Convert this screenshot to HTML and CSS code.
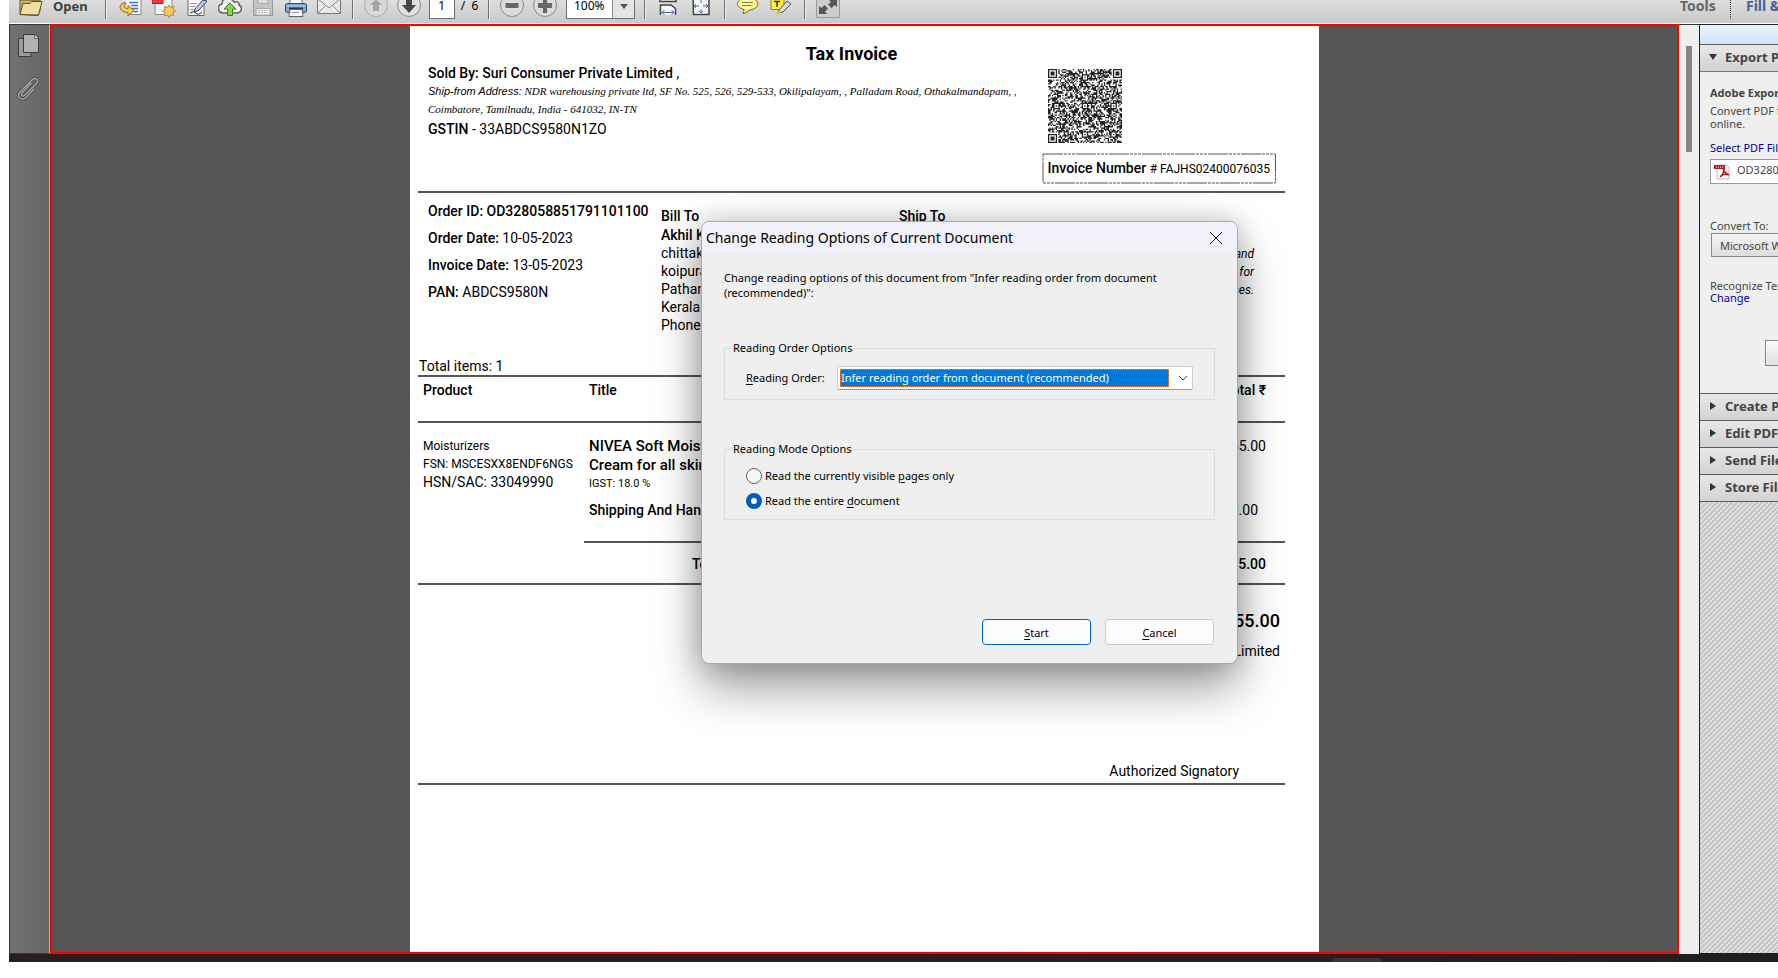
FILE: index.html
```html
<!DOCTYPE html>
<html lang="en">
<head>
<meta charset="utf-8">
<title>Tax Invoice</title>
<link rel="stylesheet" href="styles.css">
</head>
<body>
<div class="app">
  <header class="toolbar">
    <button class="open-btn"><svg class="icon folder" viewBox="0 0 26 24"><path d="M2 0V14.500L20 15.500L22 11V0Z" fill="#c9b36e" stroke="#5d512c"/><path d="M2 14.500L5 3.500H12L13.500 1.500H24L20.500 15Z" fill="#f2dfa0" stroke="#5d512c"/></svg><span>Open</span></button>
    <i class="sep"></i>
    <div class="group">
      <button class="tool" aria-label="Convert"><svg class="icon" viewBox="0 0 24 24"><path d="M7-2H22V14.500H9" fill="#f8f8f8" stroke="#888"/><path d="M10 2.500H19M12 5.500H19M13 8.500H19M14 11.500H19" stroke="#3478c8" stroke-width="1.500"/><path d="M4 3C-1 6 0 12 9 12.500V16L15 10.500L9 5.500V8.500C5 8.500 4 6 7 3Z" fill="#f6c658" stroke="#94651c"/></svg></button>
      <button class="tool" aria-label="Create PDF"><svg class="icon" viewBox="0 0 24 24"><path d="M3-1H20V14.500H3Z" fill="#f5f5f5" stroke="#888"/><path d="M0-1H11V3.500H0Z" fill="#e83b40" stroke="#a92025"/><path d="M17 5L18.500 7.500L21.500 6.500L21 9.500L23.500 11L21 12.500L21.500 15.500L18.500 15L17 17.500L15.500 15L12.500 15.500L13 12.500L10.500 11L13 9.500L12.500 6.500L15.500 7.500Z" fill="#f7cf61" stroke="#bc812a"/></svg></button>
      <button class="tool" aria-label="Sign"><svg class="icon" viewBox="0 0 24 24"><path d="M3-1H19V15.500H3Z" fill="#f7f7f7" stroke="#666"/><path d="M5 3.500H12M5 6.500H10M5 9.500H9" stroke="#999"/><path d="M10 9L18 0L22 1L14 10L9 12Z" fill="#b8cce4" stroke="#31465f"/><path d="M5 13Q9 10 11 13T17 12" fill="none" stroke="#222"/></svg></button>
      <button class="tool" aria-label="Upload"><svg class="icon" viewBox="0 0 24 24"><path d="M6 13C-1 13-1 5 4 4C4-2 12-4 16 2C20 1 22 4 21 5C25 7 24 13 18 13Z" fill="#f1f1f1" stroke="#666" stroke-width="1.500"/><path d="M12 3L18 9H14.500V15.500H9.500V9H6Z" fill="#8bd34d" stroke="#3b821a"/></svg></button>
      <button class="tool" aria-label="Save"><svg class="icon" viewBox="0 0 24 24"><path d="M2.500-1H21.500V15.500H2.500Z" fill="#c4c4c4" stroke="#999"/><path d="M7-1H17V3.500H7Z" fill="#ddd" stroke="#aaa"/><path d="M5 8.500H19V15H5Z" fill="#eee" stroke="#aaa"/><path d="M7 10.500H17M7 12.500H17" stroke="#bbb" stroke-dasharray="2 1"/></svg></button>
      <button class="tool" aria-label="Print"><svg class="icon" viewBox="0 0 24 24"><path d="M6-1H18V5H6Z" fill="#fff" stroke="#777"/><rect x="1.500" y="3.500" width="21" height="9" rx="2" fill="#79a6d2" stroke="#30495f"/><path d="M3 6H21" stroke="#b6d2ea"/><path d="M5 8.500H19" stroke="#24364a" stroke-width="2"/><path d="M6 9.500H18L19 16.500H5Z" fill="#fafafa" stroke="#666"/><path d="M8 12.500H15" stroke="#999"/></svg></button>
      <button class="tool" aria-label="E-mail"><svg class="icon" viewBox="0 0 24 24"><path d="M.5-1H23.500V13.500H.5Z" fill="#e9e9e9" stroke="#777"/><path d="M1 13L9 5M23 13L15 5M1-1L12 8L23-1" fill="none" stroke="#888"/></svg></button>
    </div>
    <i class="sep"></i>
    <div class="group">
      <button class="tool" aria-label="Previous page"><svg class="icon" viewBox="0 0 24 24"><circle cx="12" cy="5" r="11.500" fill="#d8d8d8" stroke="#aaa"/><path d="M12-1L18 5H15V11H9V5H6Z" fill="#a5a5a5"/></svg></button>
      <button class="tool" aria-label="Next page"><svg class="icon" viewBox="0 0 24 24"><circle cx="12" cy="5" r="11.500" fill="#e0e0e0" stroke="#888"/><path d="M9-1H15V5H19L12 13L5 5H9Z" fill="#484848"/></svg></button>
    </div>
    <input class="page-no" value="1" aria-label="Page number">
    <span class="page-total">/&nbsp; 6</span>
    <i class="sep"></i>
    <div class="group">
      <button class="tool" aria-label="Zoom out"><svg class="icon" viewBox="0 0 24 24"><circle cx="12" cy="5" r="11.500" fill="#dcdcdc" stroke="#888"/><path d="M5.500 3H18.500V8H5.500Z" fill="#666"/></svg></button>
      <button class="tool" aria-label="Zoom in"><svg class="icon" viewBox="0 0 24 24"><circle cx="12" cy="5" r="11.500" fill="#dcdcdc" stroke="#888"/><path d="M5 3H10V-2H14V3H19V8H14V13H10V8H5Z" fill="#666"/></svg></button>
    </div>
    <div class="zoom-box"><input class="zoom-value" value="100%" aria-label="Zoom"><button class="zoom-drop" aria-label="Zoom levels"><svg class="icon drop" viewBox="0 0 22 24"><path d="M7 4H15L11 9Z" fill="#555"/></svg></button></div>
    <i class="sep"></i>
    <div class="group">
      <button class="tool" aria-label="Fit width"><svg class="icon" viewBox="0 0 24 24"><path d="M4-1V1.500H20V-1M4.500 15V5H15L19.500 8.500V15" fill="#f5f5f5" stroke="#444" stroke-width="1.500"/><path d="M6 12.500H18M8.500 10L6 12.500L8.500 15M15.500 10L18 12.500L15.500 15" fill="none" stroke="#4967ad"/></svg></button>
      <button class="tool" aria-label="Fit page"><svg class="icon" viewBox="0 0 24 24"><path d="M4-2H20V14.500H4.500Z" fill="#f5f5f5" stroke="#444" stroke-width="1.500"/><path d="M12-1V3M12 9V13M5 6H10M14 6H19M7 4L5 6L7 8M17 4L19 6L17 8M10 11L12 13L14 11" fill="none" stroke="#4967ad"/></svg></button>
    </div>
    <i class="sep"></i>
    <div class="group">
      <button class="tool" aria-label="Comment"><svg class="icon" viewBox="0 0 24 24"><path d="M12-2C25-2 25 9 13 10C12 12 10 13 7 13.500Q8 12 8 9.500C-2 7-1-2 12-2Z" fill="#fff68c" stroke="#6d682a"/><path d="M6 2.500H17M6 5.500H15" stroke="#777"/></svg></button>
      <button class="tool" aria-label="Highlight"><svg class="icon" viewBox="0 0 24 24"><path d="M2-1H15V9.500H2Z" fill="#ffef3c" stroke="#8b8015"/><path d="M5 1.500H11M8 1V7" stroke="#333" stroke-width="1.500"/><path d="M10 10L18 1L22 4L14 12L9 13Z" fill="#ddd" stroke="#555"/><path d="M7 14L11 12" stroke="#dfce20" stroke-width="2"/></svg></button>
    </div>
    <i class="sep"></i>
    <button class="tool" aria-label="Full screen"><svg class="icon" viewBox="0 0 24 24"><path d="M.5-1H23.500V17.500H.5Z" fill="#ccc" stroke="#999"/><path d="M3 6L5.500 8L8.500 5L12 8.500L9 11.500L11 14H3ZM13 0H21V7L18.500 5L15.500 8L12 4.500L15 2Z" fill="#555"/></svg></button>
    <nav class="side-tabs"><button class="tab">Tools</button><button class="tab tab-blue">Fill &amp; Sign</button></nav>
  </header>

  <main class="workspace">
    <aside class="rail">
      <button class="rail-btn" aria-label="Pages"><svg class="rail-icon" viewBox="0 0 24 24"><path d="M1.500 5.500H14V23.500H1.500Z" fill="#9a9a9a" stroke="#3d3d3d"/><path d="M6.500 1.500H18L21.500 5V19.500H6.500Z" fill="#b2b2b2" stroke="#3d3d3d"/><path d="M17.500 2V5.500H21" fill="#ddd" stroke="#666"/></svg></button>
      <button class="rail-btn" aria-label="Attachments"><svg class="rail-icon" viewBox="0 0 24 24"><path d="M14.500 6L5.500 15.500C3 18 5.500 20.500 8 18L19 7C23 3 18.500-.5 15 3L3.500 14.500C-1 19 4 25 9 20.500L17 12" fill="none" stroke="#444" stroke-width="3"/><path d="M14.500 6L5.500 15.500C3 18 5.500 20.500 8 18L19 7C23 3 18.500-.5 15 3L3.500 14.500C-1 19 4 25 9 20.500L17 12" fill="none" stroke="#aaa" stroke-width="1.500"/></svg></button>
    </aside>

    <div class="viewer">
      <article class="page">
        <section class="seller">
          <h1 class="doc-title">Tax Invoice</h1>
          <div class="seller-row">
            <div class="seller-info">
              <p class="strong">Sold By: Suri Consumer Private Limited <span class="regular">,</span></p>
              <p class="address"><b class="ship-label">Ship-from Address:</b> NDR warehousing private ltd, SF No. 525, 526, 529-533, Okilipalayam, , Palladam Road, Othakalmandapam, ,<br>Coimbatore, Tamilnadu, India - 641032, IN-TN</p>
              <p class="gstin"><b class="strong">GSTIN</b> - 33ABDCS9580N1ZO</p>
            </div>
            <div class="seller-code">
              <svg class="qr" viewBox="0 0 57 57" role="img" aria-label="QR code"><path id="qr-path"/></svg>
              <p class="invoice-no"><svg class="dashes"><rect x="1" y="1" width="100%" height="100%"/></svg><b class="strong">Invoice Number</b> <span class="invoice-id"># FAJHS02400076035</span></p>
            </div>
          </div>
        </section>

        <section class="order">
          <div class="order-grid">
            <div class="order-info">
              <p class="strong">Order ID: OD328058851791101100</p>
              <p><b class="strong">Order Date:</b> 10-05-2023</p>
              <p><b class="strong">Invoice Date:</b> 13-05-2023</p>
              <p><b class="strong">PAN:</b> ABDCS9580N</p>
            </div>
            <div class="party">
              <h2 class="party-title">Bill To</h2>
              <p class="strong">Akhil K</p><p>chittak</p><p>koipura</p><p>Pathan</p><p>Kerala</p><p>Phone:</p>
            </div>
            <div class="party"><h2 class="party-title">Ship To</h2></div>
            <p class="note">and<br>for<br>ses.</p>
          </div>
          <p class="total-items">Total items: 1</p>
        </section>

        <table class="items">
          <thead><tr><th class="col-product">Product</th><th>Title</th><th class="num">Total ₹</th></tr></thead>
          <tbody>
            <tr class="row-item">
              <td rowspan="3" class="product"><p class="small">Moisturizers</p><p class="small">FSN: MSCESXX8ENDF6NGS</p><p>HSN/SAC: 33049990</p></td>
              <td><p class="item-name">NIVEA Soft Moist<br>Cream for all skin</p><p class="tax">IGST: 18.0 %</p></td>
              <td class="num">55.00</td>
            </tr>
            <tr class="row-ship"><td class="strong">Shipping And Hand</td><td class="num zero">0.00</td></tr>
            <tr class="row-total"><td class="total-label">Total</td><td class="num strong">55.00</td></tr>
          </tbody>
        </table>

        <section class="sign">
          <p class="grand">55.00</p>
          <p class="company">Limited</p>
          <p class="signatory">Authorized Signatory</p>
        </section>
      </article>
    </div>

    <div class="scroll"><div class="thumb"></div></div>

    <aside class="panel">
      <div class="panel-top"></div>
      <button class="panel-head first"><svg class="tri" viewBox="0 0 10 10"><path d="M1 2H9L5 8Z"/></svg>Export PDF</button>
      <div class="export">
        <p class="export-title">Adobe ExportPDF</p>
        <p class="export-text">Convert PDF files<br>online.</p>
        <a class="link select-file" href="#">Select PDF File:</a>
        <div class="file"><svg class="pdf" viewBox="0 0 16 16"><path d="M3 1H13L15 4V15H3Z" fill="#fff" stroke="#bbb"/><path d="M0 1H11V5H0Z" fill="#b01c24"/><path d="M2 3H9" stroke="#fff" stroke-dasharray="1 1"/><path d="M9 4Q10 9 15 11Q10 9 6 13Q10 10 10 4" fill="none" stroke="#b01c24" stroke-width="1.500"/></svg><span>OD3280588</span></div>
        <label class="convert" for="fmt">Convert To:</label>
        <select id="fmt" class="format"><option>Microsoft Word</option></select>
        <p class="recognize">Recognize Text</p>
        <a class="link change" href="#">Change</a>
        <button class="convert-btn" aria-label="Convert"></button>
      </div>
      <button class="panel-head"><svg class="tri" viewBox="0 0 10 10"><path d="M2 1L8 5L2 9Z"/></svg>Create PDF</button>
      <button class="panel-head"><svg class="tri" viewBox="0 0 10 10"><path d="M2 1L8 5L2 9Z"/></svg>Edit PDF</button>
      <button class="panel-head"><svg class="tri" viewBox="0 0 10 10"><path d="M2 1L8 5L2 9Z"/></svg>Send Files</button>
      <button class="panel-head"><svg class="tri" viewBox="0 0 10 10"><path d="M2 1L8 5L2 9Z"/></svg>Store Files</button>
      <svg class="hatch"><defs><pattern id="h" width="5" height="5" patternUnits="userSpaceOnUse"><path d="M4 0h1v1h-1zM3 1h1v1h-1zM2 2h1v1h-1zM1 3h1v1h-1zM0 4h1v1h-1z" fill="#f4f4f4" shape-rendering="crispEdges"/></pattern></defs><rect width="100%" height="100%" fill="url(#h)"/></svg>
    </aside>
  </main>
  <footer class="taskbar"><i class="task"></i></footer>

  <form class="dialog" role="dialog" aria-labelledby="dlg-title">
    <header class="dialog-bar"><h2 id="dlg-title" class="dialog-title">Change Reading Options of Current Document</h2><button type="button" class="close" aria-label="Close"><svg class="x" viewBox="0 0 14 14"><path d="M1 1L13 13M13 1L1 13"/></svg></button></header>
    <div class="dialog-body">
      <p class="intro">Change reading options of this document from "Infer reading order from document (recommended)":</p>
      <fieldset class="box order-box">
        <legend>Reading Order Options</legend>
        <label class="combo-label" for="ro"><u>R</u>eading Order:</label>
        <div class="combo"><select id="ro" class="combo-select"><option>Infer reading order from document (recommended)</option></select><svg class="chev" viewBox="0 0 10 6"><path d="M1 1L5 5L9 1"/></svg></div>
      </fieldset>
      <fieldset class="box mode-box">
        <legend>Reading Mode Options</legend>
        <div class="choices">
          <label class="choice"><input type="radio" name="m"><span>Read the currently visible <u>p</u>ages only</span></label>
          <label class="choice"><input type="radio" name="m" checked><span>Read the entire <u>d</u>ocument</span></label>
        </div>
      </fieldset>
      <div class="actions"><button type="button" class="btn primary"><span><u>S</u>tart</span></button><button type="button" class="btn"><span><u>C</u>ancel</span></button></div>
    </div>
  </form>
</div>
<script src="qr.js"></script>
</body>
</html>
```
FILE: styles.css
```css
* { box-sizing: border-box; }
body, p, h1, h2 { margin: 0; }
body { background: #fff; font-family: "Noto Sans", sans-serif; font-size: 11px; color: #000; }
button, input, select { font: inherit; color: inherit; margin: 0; padding: 0; }
svg { display: block; }
.app { position: relative; display: grid; grid-template-rows: 24px 1fr 8px; height: calc(100vh - 16px); margin-left: 9px; overflow: hidden; }

/* toolbar */
.toolbar { display: flex; align-items: flex-start; min-width: 0; overflow: hidden; padding-left: 9px; background: linear-gradient(#dedede, #c9c9c9); border-bottom: 1px solid #fff; font-size: 12px; }
.toolbar button { border: 0; background: none; }
.icon { width: 24px; height: 24px; }
.folder { width: 26px; }
.open-btn { display: flex; gap: 9px; font-weight: 700; font-size: 13px; line-height: 12px; color: #3f3f3f; }
.sep { flex: none; width: 2px; height: 19px; margin: 0 10px 0 11px; border-left: 1px solid #6e6e6e; border-right: 1px solid #f0f0f0; }
.open-btn + .sep { margin: 0 12px 0 17px; }
.group { display: flex; gap: 9px; }
.page-no { width: 26px; height: 19px; margin-left: 8px; padding-bottom: 8px; border: 1px solid #6e6e6e; border-top: 0; background: #fff; text-align: center; }
.page-total { width: 20px; margin-left: 6px; line-height: 11px; white-space: nowrap; }
.page-total + .sep { margin-left: 7px; }
.zoom-box { display: flex; width: 69px; height: 19px; margin-left: 9px; border: 1px solid #6e6e6e; border-top: 0; background: #fff; overflow: hidden; }
.zoom-value { width: 45px; height: 19px; padding-bottom: 8px; border: 0; text-align: center; }
.toolbar .zoom-drop { width: 22px; border-left: 1px solid #888; background: #e4e4e4; }
.drop { width: 22px; }
.zoom-box + .sep { margin-left: 9px; }
.side-tabs { display: flex; flex: none; width: 98px; height: 19px; margin-left: auto; overflow: hidden; }
.tab { flex: none; width: 51px; line-height: 12px; font-weight: 700; font-size: 14px; text-align: left; white-space: nowrap; height: 19px; padding-bottom: 7px; }
.tab:first-child { color: #666; border-right: 1px dotted #333; }
.side-tabs .tab-blue { width: 80px; margin-left: 15px; color: #456595; }

/* workspace */
.workspace { display: grid; grid-template-columns: 41px minmax(0, 1fr) 20px 79px; min-height: 0; }
.rail { display: flex; flex-direction: column; align-items: center; gap: 20px; padding: 8px 2px 0 0; background: linear-gradient(90deg, #717171, #676767); border: 1px solid #363636; border-right-color: #b0b0b0; }
.rail-btn { border: 0; background: none; }
.rail-icon { width: 24px; height: 24px; }
.viewer { display: flex; justify-content: center; min-height: 0; overflow: hidden; border: 2px solid #f00; background: #555; }
.page { width: 909px; padding: 17px 34px 0 8px; background: #fff; font-family: Roboto, sans-serif; font-size: 14px; line-height: 18px; }
.strong { font-weight: 500; }
.regular { font-weight: 400; }
.doc-title { font-size: 18px; line-height: 21px; font-weight: 700; text-align: center; }
.seller { border-bottom: 2px solid #555; padding-bottom: 7px; }
.seller-row { display: flex; justify-content: space-between; padding: 0 9px 0 10px; }
.address { font: italic 11px/18px "Liberation Serif", serif; white-space: nowrap; }
.ship-label { font-family: "Liberation Sans", sans-serif; font-weight: 400; }
.gstin { line-height: 22px; }
.seller-code { padding-top: 5px; }
.qr { width: 74px; height: 74px; margin-left: 6px; fill: #222; }
.invoice-no { position: relative; margin-top: 10px; padding: 6px; line-height: 18px; white-space: nowrap; }
.invoice-id { font-size: 12px; }
.dashes { position: absolute; inset: 0; width: 100%; height: 100%; }
.dashes rect { width: calc(100% - 2px); height: calc(100% - 2px); fill: none; stroke: #555; stroke-dasharray: 20 1 3 1 3 1 3 1; }
.order { border-bottom: 2px solid #555; }
.order-grid { display: grid; grid-template-columns: 233px 238px 1fr auto; padding: 0 31px 23px 10px; }
.order-info { padding-top: 5px; line-height: 27px; }
.party { padding-top: 13px; }
.party-title { font-size: 14px; line-height: 20px; font-weight: 500; }
.note { padding-top: 52px; font-size: 12px; font-style: italic; text-align: right; }
.total-items { padding-left: 1px; }
.items { width: 100%; border-collapse: separate; border-spacing: 0; }
.items th { height: 46px; padding: 4px 5px 0; border-bottom: 2px solid #555; font-weight: 500; text-align: left; vertical-align: top; }
.items .col-product { width: 166px; }
.items td { padding: 14px 5px 0; vertical-align: top; }
.items .product { border-bottom: 2px solid #555; white-space: nowrap; }
.items .num { padding-right: 19px; text-align: right; }
.items .zero { padding-right: 27px; }
.small { font-size: 12px; }
.item-name { font-size: 15px; line-height: 19px; font-weight: 500; }
.tax { font-size: 11px; font-weight: 400; }
.row-item td { height: 74px; }
.items .row-ship td { height: 46px; padding-top: 4px; border-bottom: 2px solid #555; }
.items .row-total td { height: 42px; padding-top: 12px; border-bottom: 2px solid #555; }
.items .total-label { padding-left: 108px; font-weight: 500; }
.sign { padding: 25px 5px 3px; border-bottom: 2px solid #555; text-align: right; }
.grand { font-size: 18px; line-height: 22px; font-weight: 500; }
.company { margin-top: 10px; }
.signatory { margin-top: 102px; padding-right: 41px; }

.scroll { padding: 21px 7px 0; background: #efefef; border-top: 1px solid #333; }
.thumb { height: 106px; background: #858585; }

/* right panel */
.panel { display: flex; flex-direction: column; overflow: hidden; border: 1px solid #222; border-right: 0; background: #efefef; color: #444; white-space: nowrap; }
.panel-top { flex: none; height: 19px; background: linear-gradient(#e9f3fc, #cfe5f7); }
.panel-head { flex: none; display: flex; align-items: center; gap: 7px; width: 110px; height: 27px; padding: 0 0 2px 8px; border: 0; border-top: 1px solid #5c5c5c; background: linear-gradient(#e8e8e8, #d2d2d2); font-size: 13px; font-weight: 700; color: #444; }
.panel-head.first { height: 28px; border-bottom: 1px solid #777; }
.tri { width: 10px; height: 10px; fill: #333; }
.export { display: flex; flex-direction: column; flex: none; width: 110px; height: 321px; padding: 12px 0 0 10px; }
.export-title { font-weight: 700; line-height: 18px; }
.export-text { margin-top: 2px; line-height: 13px; }
.link { color: #00009c; text-decoration: none; line-height: 14px; }
.select-file { margin-top: 11px; }
.file { display: flex; gap: 7px; height: 25px; margin-top: 4px; padding: 4px 3px; border: 1px solid #999; background: #fff; line-height: 12px; }
.pdf { width: 16px; height: 16px; }
.convert { margin-top: 34px; line-height: 15px; }
.format { appearance: none; height: 24px; margin-left: 1px; padding-left: 8px; border: 1px solid #888; border-radius: 0; background: linear-gradient(#f6f6f6, #ddd); }
.recognize { margin-top: 22px; line-height: 13px; }
.change { line-height: 11px; }
.convert-btn { flex: none; height: 26px; margin: 37px 0 0 55px; border: 1px solid #888; background: linear-gradient(#fafafa, #e0e0e0); }
.hatch { flex: 1; width: 100%; min-height: 0; background: #c9c9c9; border-top: 1px solid #5c5c5c; }
.taskbar { background: linear-gradient(90deg, #2b1d21, #241f22 30%, #2c1c24 60%, #211e20); padding: 4px 0 0 1323px; overflow: hidden; }
.task { display: block; width: 50px; height: 8px; border-radius: 4px; background: #3c3438; }

/* dialog */
.dialog { position: absolute; left: 692px; top: 221px; width: 537px; border: 1px solid #a9a9a9; border-radius: 8px; background: #efefef; box-shadow: 0 24px 48px rgba(0, 0, 0, .38), 0 0 28px rgba(0, 0, 0, .2); overflow: hidden; }
.dialog-bar { display: flex; justify-content: space-between; align-items: center; height: 31px; padding: 0 14px 0 4px; background: #f2f0f8; }
.dialog-title { font-size: 14px; font-weight: 400; }
.close { border: 0; background: none; }
.x { width: 14px; height: 14px; fill: none; stroke: #111; }
.dialog-body { padding: 17px 22px 18px; }
.intro { padding-right: 30px; line-height: 15px; }
.box { min-width: 0; margin: 0; padding: 0; border: 1px solid #dcdcdc; }
legend { margin-left: 6px; padding: 0 2px; line-height: 16px; }
.order-box { display: flex; align-items: center; gap: 12px; height: 60px; margin-top: 40px; }
.combo-label { width: 79px; margin-left: 21px; white-space: nowrap; }
.combo { position: relative; flex: 1; margin-right: 21px; }
.combo-select { appearance: none; display: block; width: 100%; height: 24px; padding: 2px 23px 2px 3px; border: 1px solid #ccc; border-bottom-color: #999; border-radius: 2px; background: #fff linear-gradient(#0078d7, #0078d7) 2px 2px / calc(100% - 25px) calc(100% - 4px) no-repeat; color: #fff; }
.combo::before { content: ""; position: absolute; inset: 3px 24px 3px 3px; border: 1px dotted #f09040; pointer-events: none; }
.chev { position: absolute; right: 5px; top: 9px; width: 10px; height: 6px; fill: none; stroke: #444; }
.mode-box { height: 79px; margin-top: 41px; }
.choices { padding: 6px 0 0 21px; }
.choice { display: flex; align-items: center; gap: 3px; height: 25px; }
.choice input { width: 16px; height: 16px; appearance: none; border: 1px solid #666; border-radius: 50%; background: #f6f6f6; }
.choice input:checked { border: 5px solid #005fb8; background: #fff; }
.actions { display: flex; justify-content: flex-end; gap: 14px; margin-top: 99px; padding-right: 1px; }
.btn { width: 109px; height: 26px; border: 1px solid #ccc; border-radius: 4px; background: #fdfdfd; }
.primary { border-color: #0067c0; }
u { text-underline-offset: 2px; }
```
FILE: qr.js
```js
// Draws a 57-module QR symbol: finder and alignment marks plus data modules.
(function () {
  var size = 57, seed = 7, d = "";
  function ring(x, y, cx, cy, r) {
    var dist = Math.max(Math.abs(x - cx), Math.abs(y - cy));
    if (dist > r + 1) return null;
    if (r === 3) return dist <= 1 || dist === 3;
    return dist > r ? null : dist !== 1;
  }
  var marks = [[3, 3, 3], [53, 3, 3], [3, 53, 3], [28, 6, 2], [6, 28, 2], [28, 28, 2], [50, 28, 2], [28, 50, 2], [50, 50, 2]];
  for (var y = 0; y < size; y++) {
    for (var x = 0; x < size; x++) {
      seed = (seed * 1103515245 + 12345) % 2147483648;
      var on = (seed >> 16) % 100 < 53;
      marks.forEach(function (m) {
        var v = ring(x, y, m[0], m[1], m[2]);
        if (v !== null) on = v;
      });
      if (on) d += "M" + x + " " + y + "h1v1h-1z";
    }
  }
  document.getElementById("qr-path").setAttribute("d", d);
})();
```
